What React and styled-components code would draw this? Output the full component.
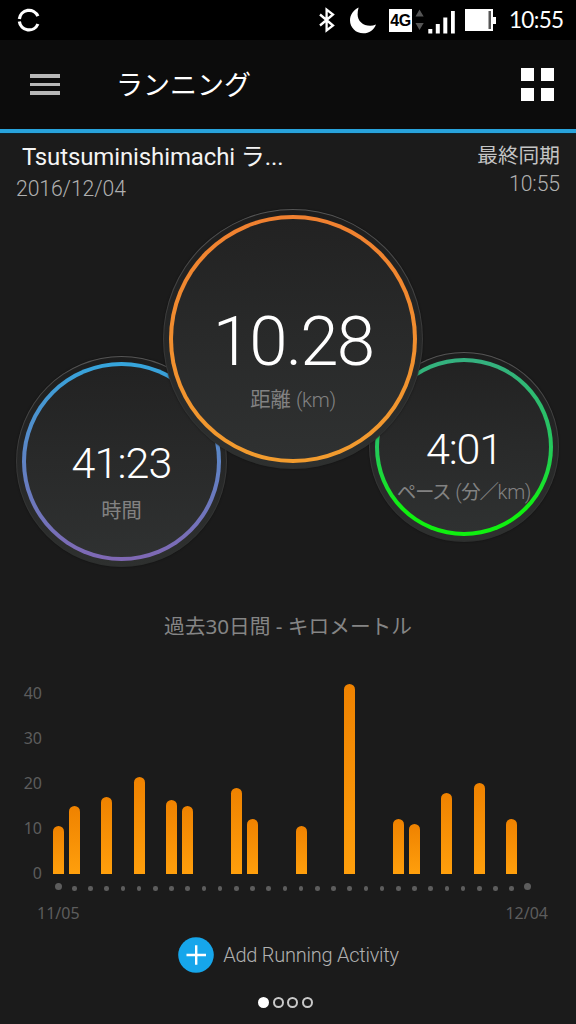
import React from "react";
import styled, { createGlobalStyle } from "styled-components";

const GlobalStyle = createGlobalStyle`
  * {
    box-sizing: border-box;
  }
  body {
    margin: 0;
    background: #1b1b1b;
    font-family: Roboto, "Noto Sans CJK JP", sans-serif;
  }
`;

const Screen = styled.div`
  width: 576px;
  height: 1024px;
  display: flex;
  flex-direction: column;
  background: #1b1b1b;
  overflow: hidden;
`;

const StatusBar = styled.header`
  height: 40px;
  flex: none;
  display: flex;
  align-items: center;
  justify-content: space-between;
  padding: 0 13px 0 17px;
  background: #000;
`;

const StatusIcons = styled.div`
  display: flex;
  align-items: center;
`;

const StatusSvg = styled.svg`
  display: block;
  flex: none;
  margin-left: ${(props) => props.$left || 0}px;
`;

const Clock = styled.span`
  width: 54px;
  margin-left: 13px;
  font-family: Lato, sans-serif;
  font-size: 22.5px;
  line-height: 42px;
  letter-spacing: -0.7px;
  white-space: nowrap;
  color: #fff;
`;

const NetworkBadge = styled.span`
  width: 23px;
  height: 23px;
  margin: 0 3px 0 13px;
  background: #fff;
  color: #000;
  font: bold 16px/24px "Liberation Sans", sans-serif;
  letter-spacing: -0.3px;
  text-align: center;
`;

const Toolbar = styled.nav`
  height: 93px;
  flex: none;
  display: flex;
  align-items: center;
  padding: 0 22px 0 30px;
  background: #0c0c0c;
  border-bottom: 4px solid #28a3dc;
  box-shadow: 0 1px 1px #10232d;
`;

const MenuButton = styled.div`
  width: 30px;
  display: grid;
  gap: 5px;
  span {
    height: 3.6px;
    background: #b8b8b8;
  }
`;

const PageTitle = styled.h1`
  flex: 1;
  margin: 0 0 0 56px;
  padding-top: 2px;
  font-size: 27px;
  font-weight: 400;
  line-height: 40px;
  color: #fff;
`;

const GridButton = styled.div`
  display: grid;
  grid-template-columns: 13px 13px;
  gap: 7px;
  span {
    height: 13px;
    background: #fff;
  }
`;

const Summary = styled.section`
  height: 76px;
  flex: none;
  display: flex;
  justify-content: space-between;
  padding: 8px 16px 0;
  white-space: nowrap;
`;

const SummarySide = styled.div`
  text-align: ${(props) => props.$align || "left"};
`;

const ActivityName = styled.div`
  padding-left: 6px;
  font-size: 24px;
  line-height: 32px;
  letter-spacing: -0.12px;
  color: #f4f4f4;
`;

const SyncLabel = styled.div`
  font-size: 20.7px;
  line-height: 30px;
  color: #c4c4c4;
`;

const SummaryValue = styled.div`
  font-size: 21.2px;
  font-weight: 300;
  line-height: ${(props) => props.$line || 32}px;
  letter-spacing: -0.1px;
  color: #b0b0b0;
`;

const Gauges = styled.section`
  height: 401px;
  flex: none;
  display: flex;
  align-items: flex-start;
  padding-left: 16px;
`;

const GaugeShell = styled.div`
  position: relative;
  z-index: ${(props) => (props.$front ? 1 : 0)};
  flex: none;
  width: ${(props) => props.$size}px;
  height: ${(props) => props.$size}px;
  margin: ${(props) => props.$margin};
  padding: 5px;
  border: 1px solid transparent;
  border-radius: 50%;
  background:
    linear-gradient(#1d1d1d, #262727 50%, #2e302f) padding-box,
    linear-gradient(#555, #383838 50%, #2c2e2d) border-box;
  box-shadow: 0 0 2px rgba(0, 0, 0, 0.5);
`;

const GaugeFace = styled.div`
  width: 100%;
  height: 100%;
  display: flex;
  flex-direction: column;
  align-items: center;
  border: 4px solid transparent;
  border-radius: 50%;
  background:
    linear-gradient(#222, #292a2a 50%, #2f3131) padding-box,
    linear-gradient(${(props) => props.$ring}) border-box;
  white-space: nowrap;
`;

const GaugeValue = styled.div`
  margin-top: ${(props) => props.$top}px;
  font-size: ${(props) => props.$size}px;
  font-weight: 300;
  line-height: 1;
  letter-spacing: ${(props) => props.$spacing || 0}px;
  color: #fff;
`;

const GaugeLabel = styled.div`
  margin-top: ${(props) => props.$top}px;
  font-size: 20.3px;
  font-weight: 400;
  line-height: 30px;
  color: #828282;
`;

const Kana = styled.span`
  font-size: 19.5px;
  letter-spacing: -1.4px;
`;

const Unit = styled.span`
  font-weight: 300;
  letter-spacing: -0.3px;
`;

const ChartTitle = styled.h2`
  height: 32px;
  flex: none;
  margin: 0;
  font: 400 20.7px/32px "Noto Sans", "Noto Sans CJK JP", sans-serif;
  text-align: center;
  color: #858585;
`;

const Chart = styled.section`
  flex: none;
  display: flex;
  margin-top: 39px;
`;

const Scale = styled.div`
  width: 42px;
  height: 204px;
  display: flex;
  flex-direction: column;
  justify-content: space-between;
  font: 16px/24px "Noto Sans", sans-serif;
  text-align: right;
  color: #5d5d5d;
`;

const Plot = styled.div`
  width: 486px;
  margin-left: 8px;
`;

const Bars = styled.div`
  height: 193px;
  display: grid;
  grid-template-columns: repeat(30, 1fr);
  align-items: end;
  justify-items: center;
`;

const Bar = styled.div`
  width: 11px;
  border-radius: 5.5px 5.5px 0 0;
  background: linear-gradient(#ef8200, #ff9f0c);
`;

const Days = styled.div`
  height: 28px;
  display: grid;
  grid-template-columns: repeat(30, 1fr);
  align-items: center;
  justify-items: center;
`;

const Day = styled.span`
  width: ${(props) => (props.$edge ? 7 : 4.5)}px;
  height: ${(props) => (props.$edge ? 7 : 4.5)}px;
  margin-top: ${(props) => (props.$edge ? -3 : 1)}px;
  border-radius: 50%;
  background: #5d5d5d;
`;

const Dates = styled.div`
  display: flex;
  justify-content: space-between;
  margin: -1px -12px 0 -13px;
  font: 16px/24px "Noto Sans", sans-serif;
  color: #5d5d5d;
`;

const AddActivity = styled.div`
  height: 36px;
  flex: none;
  display: flex;
  align-items: center;
  justify-content: center;
  gap: 9px;
  margin-top: 12px;
  padding-left: 1px;
  font-size: 20px;
  font-weight: 300;
  letter-spacing: -0.25px;
  color: #b0b0b0;
`;

const Pager = styled.div`
  display: flex;
  justify-content: center;
  gap: 3.5px;
  margin-top: 24px;
  padding-right: 5px;
`;

const PageDot = styled.span`
  width: 11px;
  height: 11px;
  border: 2px solid ${(props) => (props.$active ? "#fff" : "#c9c9c9")};
  border-radius: 50%;
  background: ${(props) => (props.$active ? "#fff" : "transparent")};
`;

const SyncIcon = () => (
  <StatusSvg width="24" height="24" viewBox="0 0 24 24" fill="none" stroke="#fff" strokeWidth="3.2">
    <path d="M2.350 11A9.700 9.700 0 0 1 20.900 8.200M2.350 13.500A9.700 9.700 0 0 0 20.900 16" />
  </StatusSvg>
);

const BluetoothIcon = () => (
  <StatusSvg width="16" height="26" viewBox="0 0 16 26" fill="none" stroke="#fff" strokeWidth="2.3">
    <path d="M1 7.500 14 18.500 7.600 23.500V2.500L14 7.500 1 18.500" />
  </StatusSvg>
);

const MoonIcon = () => (
  <StatusSvg $left={15} width="26" height="27" viewBox="0 0 26 27" fill="#fff">
    <path d="M8.600 .5C3.500 3 0 7.800 0 13.200 0 20.500 5.900 26.300 13.300 26.300c5.800 0 10.600-3.300 12.700-8.800-2 .9-4 1.300-5.900 1.300C13 18.800 7.600 14 7.600 7.500c0-2.500.3-4.800 1-7Z" />
  </StatusSvg>
);

const SignalIcon = () => (
  <StatusSvg width="40" height="28" viewBox="0 0 40 28">
    <path d="M4.500 3.500 8.700 10.500H.5ZM4.500 24 .5 17h8.200Z" fill="#555" />
    <path
      d="M13.300 23h4v4.500h-4ZM20.800 18h4v9.500h-4ZM28.300 11.500h4v16h-4ZM36 5h3.800v22.500H36Z"
      fill="#fff"
    />
  </StatusSvg>
);

const BatteryIcon = () => (
  <StatusSvg $left={10} width="31" height="22" viewBox="0 0 31 22">
    <path d="M0 0H28V8H31V15H28V22H0Z" fill="#fff" />
    <path d="M23.500 2H26V20H23.500Z" fill="#555" />
  </StatusSvg>
);

const AddIcon = () => (
  <svg width="36" height="36" viewBox="0 0 36 36">
    <circle cx="18" cy="18" r="17.8" fill="#16a6eb" />
    <path d="M8.500 18H28M18.200 8.300v19.400" stroke="#fff" strokeWidth="2.4" />
  </svg>
);

const scaleValues = [40, 30, 20, 10, 0];

// kilometres per day, 11/05 - 12/04
const distances = [
  10.7, 15.1, 0, 17.1, 0, 21.5, 0, 16.4, 15.2, 0, 0, 19.1, 12.2, 0, 0,
  10.7, 0, 0, 42.2, 0, 0, 12.2, 11.1, 0, 18, 0, 20.3, 0, 12.2, 0,
];

const PX_PER_KM = 4.5;

function App() {
  return (
    <Screen>
      <GlobalStyle />
      <StatusBar>
        <SyncIcon />
        <StatusIcons>
          <BluetoothIcon />
          <MoonIcon />
          <NetworkBadge>4G</NetworkBadge>
          <SignalIcon />
          <BatteryIcon />
          <Clock>10:55</Clock>
        </StatusIcons>
      </StatusBar>
      <Toolbar>
        <MenuButton>
          <span />
          <span />
          <span />
        </MenuButton>
        <PageTitle>ランニング</PageTitle>
        <GridButton>
          <span />
          <span />
          <span />
          <span />
        </GridButton>
      </Toolbar>
      <Summary>
        <SummarySide>
          <ActivityName>Tsutsuminishimachi ラ...</ActivityName>
          <SummaryValue>2016/12/04</SummaryValue>
        </SummarySide>
        <SummarySide $align="right">
          <SyncLabel>最終同期</SyncLabel>
          <SummaryValue $line={26}>10:55</SummaryValue>
        </SummarySide>
      </Summary>
      <Gauges>
        <GaugeShell $size={211} $margin="147px 0 0 0">
          <GaugeFace $ring="#35a5dc, #5f83c4 50%, #8068b4">
            <GaugeValue $top={76} $size={43} $spacing={-0.9}>41:23</GaugeValue>
            <GaugeLabel $top={11}>時間</GaugeLabel>
          </GaugeFace>
        </GaugeShell>
        <GaugeShell $front $size={260} $margin="0 0 0 -64px">
          <GaugeFace $ring="#f08030, #f29c2e">
            <GaugeValue $top={88} $size={69} $spacing={-1.8}>10.28</GaugeValue>
            <GaugeLabel $top={9}>
              距離 <Unit>(km)</Unit>
            </GaugeLabel>
          </GaugeFace>
        </GaugeShell>
        <GaugeShell $size={190} $margin="143px 0 0 -54px">
          <GaugeFace $ring="#35b080, #24c95c 50%, #10f010 85%">
            <GaugeValue $top={66} $size={43} $spacing={-1.1}>4:01</GaugeValue>
            <GaugeLabel $top={6}>
              <Kana>ペース</Kana> <Unit>(</Unit>
              <Kana>分／</Kana>
              <Unit>km)</Unit>
            </GaugeLabel>
          </GaugeFace>
        </GaugeShell>
      </Gauges>
      <ChartTitle>過去30日間 - キロメートル</ChartTitle>
      <Chart>
        <Scale>
          {scaleValues.map((value) => (
            <span key={value}>{value}</span>
          ))}
        </Scale>
        <Plot>
          <Bars>
            {distances.map((km, i) => (
              <Bar key={i} style={{ height: km * PX_PER_KM }} />
            ))}
          </Bars>
          <Days>
            {distances.map((km, i) => (
              <Day key={i} $edge={i === 0 || i === distances.length - 1} />
            ))}
          </Days>
          <Dates>
            <span>11/05</span>
            <span>12/04</span>
          </Dates>
        </Plot>
      </Chart>
      <AddActivity>
        <AddIcon />
        Add Running Activity
      </AddActivity>
      <Pager>
        <PageDot $active />
        <PageDot />
        <PageDot />
        <PageDot />
      </Pager>
    </Screen>
  );
}

export default App;
